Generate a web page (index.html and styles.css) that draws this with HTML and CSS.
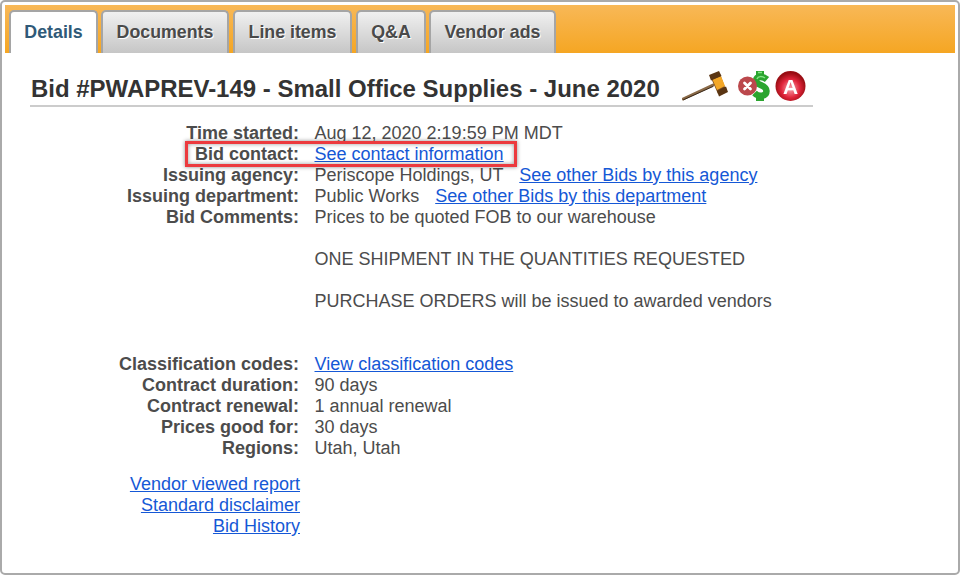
FILE: index.html
```html
<!DOCTYPE html>
<html lang="en">
<head>
<meta charset="utf-8">
<title>Bid details</title>
<link rel="stylesheet" href="styles.css">
</head>
<body>
<div class="frame">
  <nav class="tabbar">
    <a class="tab active">Details</a>
    <a class="tab w-doc">Documents</a>
    <a class="tab w-line">Line items</a>
    <a class="tab w-qa">Q&amp;A</a>
    <a class="tab w-ads">Vendor ads</a>
  </nav>
  <main class="content">
    <header class="title-row">
      <h1>Bid #PWAPREV-149 - Small Office Supplies - June 2020</h1>
      <div class="icons">
        <svg class="gavel" width="46" height="32" viewBox="0 0 46 32">
          <path d="M1 29 L31 15" stroke="#8a6a48" stroke-width="2.800" stroke-linecap="round"/>
          <path d="M1.500 29.800 L31 16.500" stroke="#2e1d10" stroke-width=".9" stroke-linecap="round"/>
          <path d="M29 8 L38 4 L44 20 L36 24 Z" fill="#7a4a1c"/>
          <path d="M30.500 9.500 L39 6 L43 16 L35 20 Z" fill="#f4a828"/>
          <path d="M27 5 L37 1 L39.500 6 L29 10.500 Z" fill="#5a3513"/>
          <path d="M35 21 L44 16.500 L46 22 L37 26.500 Z" fill="#5a3513"/>
        </svg>
        <svg class="money" width="33" height="32" viewBox="0 0 33 32">
          <rect x="18" y="1" width="8" height="7" fill="#2ba52f"/>
          <rect x="18" y="24" width="8" height="7" fill="#2ba52f"/>
          <path d="M29 9.500 C25 6 18.500 6 18 10.500 C17.500 15.500 28.500 14.500 28.500 21 C28.500 26.500 21 27.500 16.500 23" fill="none" stroke="#2ba52f" stroke-width="6.500"/>
          <path d="M27 8 C24 6 20 6 19 9 M20 2.500 H24" fill="none" stroke="#86e486" stroke-width="1.500"/>
          <circle cx="9.500" cy="16" r="9.500" fill="#bb484c"/>
          <path d="M6.500 13 L12.500 19 M12.500 13 L6.500 19" stroke="#fff" stroke-width="2.800" stroke-linecap="round"/>
        </svg>
        <svg class="badge" width="31" height="32" viewBox="0 0 31 32">
          <defs>
            <radialGradient id="ball" cx="50%" cy="58%" r="52%">
              <stop offset="0" stop-color="#f8a8b0"/>
              <stop offset=".6" stop-color="#e0243a"/>
              <stop offset="1" stop-color="#980c12"/>
            </radialGradient>
          </defs>
          <circle cx="15.500" cy="16" r="15" fill="url(#ball)"/>
          <text class="badge-letter" x="15.500" y="23.500" text-anchor="middle">A</text>
        </svg>
      </div>
    </header>
    <dl class="facts">
      <dt>Time started:</dt><dd>Aug 12, 2020 2:19:59 PM MDT</dd>
      <dt>Bid contact:</dt><dd><a href="#">See contact information</a></dd>
      <dt>Issuing agency:</dt><dd>Periscope Holdings, UT <a class="after" href="#">See other Bids by this agency</a></dd>
      <dt>Issuing department:</dt><dd>Public Works <a class="after" href="#">See other Bids by this department</a></dd>
      <dt>Bid Comments:</dt><dd class="comments">Prices to be quoted FOB to our warehouse<br><br>ONE SHIPMENT IN THE QUANTITIES REQUESTED<br><br>PURCHASE ORDERS will be issued to awarded vendors<br><br><br></dd>
      <dt>Classification codes:</dt><dd><a href="#">View classification codes</a></dd>
      <dt>Contract duration:</dt><dd>90 days</dd>
      <dt>Contract renewal:</dt><dd>1 annual renewal</dd>
      <dt>Prices good for:</dt><dd>30 days</dd>
      <dt>Regions:</dt><dd>Utah, Utah</dd>
    </dl>
    <div class="side-links">
      <a href="#">Vendor viewed report</a>
      <a href="#">Standard disclaimer</a>
      <a href="#">Bid History</a>
    </div>
  </main>
  <div class="callout"></div>
</div>
</body>
</html>
```
FILE: styles.css
```css
* { box-sizing: border-box; }
html, body { margin: 0; padding: 0; background: #fff; }
body { width: 960px; height: 575px; overflow: hidden; font-family: "Liberation Sans", Arial, sans-serif; color: #4c4c4c; }
.frame {
  position: relative;
  width: 960px; height: 575px;
  border: 2px solid #aaa;
  border-radius: 5px;
  padding: 3px 3px 0;
}
.tabbar {
  display: flex;
  align-items: flex-end;
  height: 48px;
  padding-left: 4px;
  background: linear-gradient(#f8b857, #f5a623);
}
.tab {
  display: flex; align-items: center; justify-content: center;
  height: 43px;
  margin-right: 3px;
  padding-bottom: 1px;
  border: 2px solid #a5a5a5;
  border-bottom: 0;
  border-radius: 5px 5px 0 0;
  background: linear-gradient(#f0f0f0, #c6c6c6);
  font-size: 17.800px;
  font-weight: bold;
  color: #4a4a4a;
  text-decoration: none;
  text-shadow: 1px 1px 0 #fff;
}
.tab.active { width: 89px; background: #fff; color: #2f5a78; text-shadow: none; }
.w-doc { width: 128px; margin-right: 4px; }
.w-line { width: 119px; margin-right: 4px; }
.w-qa { width: 70px; }
.w-ads { width: 127px; }
.content { padding: 20px 0 0 25px; }
.title-row {
  display: flex;
  align-items: flex-end;
  width: 783px;
  height: 34px;
  border-bottom: 2px solid #ccc;
}
h1 {
  margin: 0 0 1px;
  padding-left: 1px;
  font-size: 23.980px;
  line-height: 30px;
  font-weight: bold;
  color: #333;
  white-space: nowrap;
}
.icons { display: flex; align-items: center; margin: 0 0 3px 22px; filter: blur(.5px); }
.money { margin-left: 10px; }
.badge { margin-left: 4px; }
.badge-letter { font: bold 21px "Liberation Sans", Arial, sans-serif; fill: #fff; }
.facts {
  display: grid;
  grid-template-columns: 269px 1fr;
  column-gap: 15.500px;
  margin: 16px 0 0;
  font-size: 18px;
  line-height: 21px;
}
dt { font-weight: bold; text-align: right; white-space: nowrap; }
dd { margin: 0; white-space: nowrap; }
a { color: #1558d6; text-decoration: underline; }
.after { margin-left: 11px; }
.side-links {
  display: flex; flex-direction: column; align-items: flex-end;
  width: 270px;
  margin-top: 15px;
  font-size: 18px;
  line-height: 21px;
}
.callout {
  position: absolute;
  left: 183px; top: 139px;
  width: 332px; height: 26px;
  border: 3px solid #ec3a3e;
  box-shadow: 0 0 4px rgba(0,0,0,.45), inset 0 0 4px rgba(0,0,0,.4);
}
```
